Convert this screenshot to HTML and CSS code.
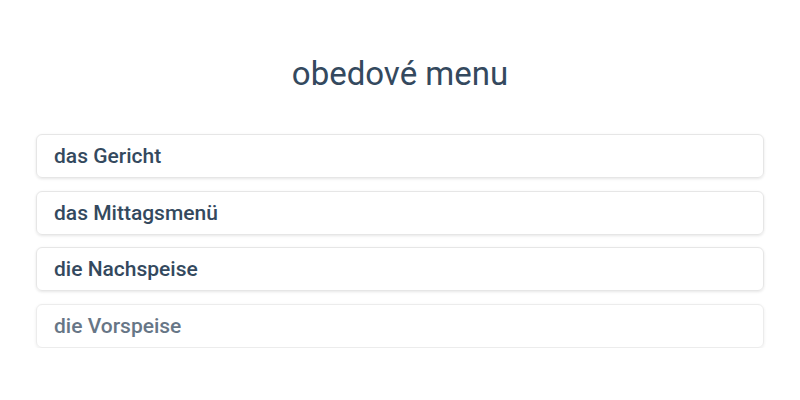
FILE: index.html
```html
<!DOCTYPE html>
<html lang="sk">

<head>
    <meta charset="UTF-8">
    <title>obedové menu</title>
    <meta name="viewport" content="width=device-width, initial-scale=1.0">
    <link rel="stylesheet" href="styles.css">
</head>

<body>
    <div class="container">
        <h1 class="title">obedové menu</h1>

        <ul class="choices">
            <li class="choice">das Gericht</li>
            <li class="choice">das Mittagsmenü</li>
            <li class="choice">die Nachspeise</li>
            <li class="choice faded">die Vorspeise</li>
        </ul>
    </div>
</body>

</html>
```

FILE: styles.css
```css
body {
    margin: 0;
    font-family: Roboto, 'Noto Sans', sans-serif;
    background-color: #fff;
    color: #34495e;
}

.container {
    padding: 54px 36px 0;
}

.title {
    margin: 0 0 40px;
    font-size: 33px;
    font-weight: 400;
    line-height: 40px;
    text-align: center;
}

.choices {
    list-style: none;
    margin: 0;
    padding: 0;
    display: flex;
    flex-direction: column;
    gap: 12.5px;
}

.choice {
    height: 42px;
    line-height: 42px;
    padding: 0 17px;
    border: 1px solid #e6e6e6;
    border-radius: 6px;
    box-shadow: 0 1px 3px rgba(0, 0, 0, 0.1);
    font-size: 21px;
    font-weight: 500;
}

.choice.faded {
    opacity: 0.75;
}
```
